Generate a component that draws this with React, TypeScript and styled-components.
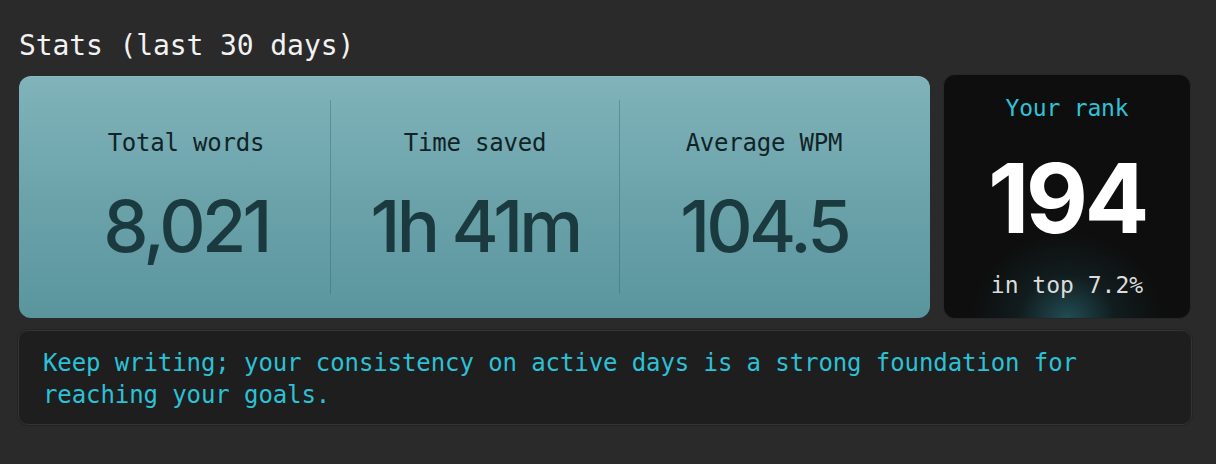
import React from "react";
import styled, { createGlobalStyle } from "styled-components";

const GlobalStyle = createGlobalStyle`
  html, body {
    margin: 0;
    padding: 0;
    background: #2a2a2a;
  }
  body {
    width: 1216px;
    height: 464px;
    overflow: hidden;
  }
`;

const MONO = `"DejaVu Sans Mono", "Liberation Mono", monospace`;
const SANS = `Inter, "Noto Sans", Arial, sans-serif`;

const Page = styled.div`
  box-sizing: border-box;
  width: 1216px;
  height: 464px;
  padding: 29px 25px 0 19px;
  display: flex;
  flex-direction: column;
  background: #2a2a2a;
`;

const Title = styled.h2`
  margin: 0 0 11px 0;
  font-family: ${MONO};
  font-weight: 400;
  font-size: 28px;
  line-height: 34px;
  color: #f2f2f2;
  letter-spacing: -0.1px;
`;

const Row = styled.div`
  display: grid;
  grid-template-columns: 911px 248px;
  gap: 13px;
  align-items: center;
  height: 245px;
`;

const StatsCard = styled.div`
  box-sizing: border-box;
  height: 242px;
  border-radius: 12px;
  padding: 0 22px 0 23px;
  display: flex;
  background: linear-gradient(180deg, #80b3ba 0%, #6ca3ab 50%, #5a959e 100%);
  box-shadow: inset 0 1px 0 rgba(255, 255, 255, 0.08);
`;

const StatColumn = styled.div`
  flex: 1;
  display: flex;
  flex-direction: column;
  align-items: center;
  justify-content: center;
  padding-bottom: 2px;
`;

const Divider = styled.div`
  width: 1px;
  margin: 24px 0;
  background: rgba(40, 90, 96, 0.35);
`;

const StatLabel = styled.div`
  font-family: ${MONO};
  font-size: 24px;
  line-height: 28px;
  color: #102427;
  letter-spacing: -0.2px;
`;

const StatValue = styled.div`
  margin-top: 33px;
  font-family: ${SANS};
  font-weight: 500;
  font-size: 72px;
  line-height: 72px;
  letter-spacing: -3.8px;
  color: #1b3a3f;
`;

const RankCard = styled.div`
  box-sizing: border-box;
  height: 245px;
  border-radius: 12px;
  border: 1px solid #262626;
  background:
    radial-gradient(ellipse 95px 85px at 50% 100%, rgba(45, 118, 130, 0.6), rgba(30, 80, 90, 0.22) 50%, rgba(0, 0, 0, 0) 100%),
    #0e0e0e;
  display: flex;
  flex-direction: column;
  align-items: center;
  padding-top: 19px;
`;

const RankLabel = styled.div`
  font-family: ${MONO};
  font-size: 23px;
  line-height: 28px;
  color: #2fc3d8;
  letter-spacing: -0.2px;
`;

const RankValue = styled.div`
  margin-top: 28px;
  font-family: ${SANS};
  font-weight: 700;
  font-size: 96px;
  line-height: 96px;
  letter-spacing: -3.6px;
  color: #ffffff;
`;

const RankSub = styled.div`
  margin-top: 25px;
  font-family: ${MONO};
  font-size: 23px;
  line-height: 28px;
  color: #dcdcdc;
`;

const Message = styled.div`
  box-sizing: border-box;
  margin-top: 11px;
  margin-left: -1px;
  width: 1174px;
  height: 95px;
  border-radius: 10px;
  border: 1px solid #343434;
  background: #1e1e1e;
  box-shadow: 0 0 0 1px rgba(0, 0, 0, 0.15);
  padding: 16px 24px 0 24px;
  font-family: ${MONO};
  font-size: 24px;
  line-height: 32px;
  letter-spacing: -0.09px;
  color: #2cc1d7;
`;

const stats = [
  { label: "Total words", value: "8,021" },
  { label: "Time saved", value: "1h 41m" },
  { label: "Average WPM", value: "104.5" },
];

export default function App() {
  return (
    <>
      <GlobalStyle />
      <Page>
        <Title>Stats (last 30 days)</Title>
        <Row>
          <StatsCard>
            {stats.map((s, i) => (
              <React.Fragment key={s.label}>
                {i > 0 && <Divider />}
                <StatColumn>
                  <StatLabel>{s.label}</StatLabel>
                  <StatValue>{s.value}</StatValue>
                </StatColumn>
              </React.Fragment>
            ))}
          </StatsCard>
          <RankCard>
            <RankLabel>Your rank</RankLabel>
            <RankValue>194</RankValue>
            <RankSub>in top 7.2%</RankSub>
          </RankCard>
        </Row>
        <Message>
          Keep writing; your consistency on active days is a strong foundation for reaching your goals.
        </Message>
      </Page>
    </>
  );
}
